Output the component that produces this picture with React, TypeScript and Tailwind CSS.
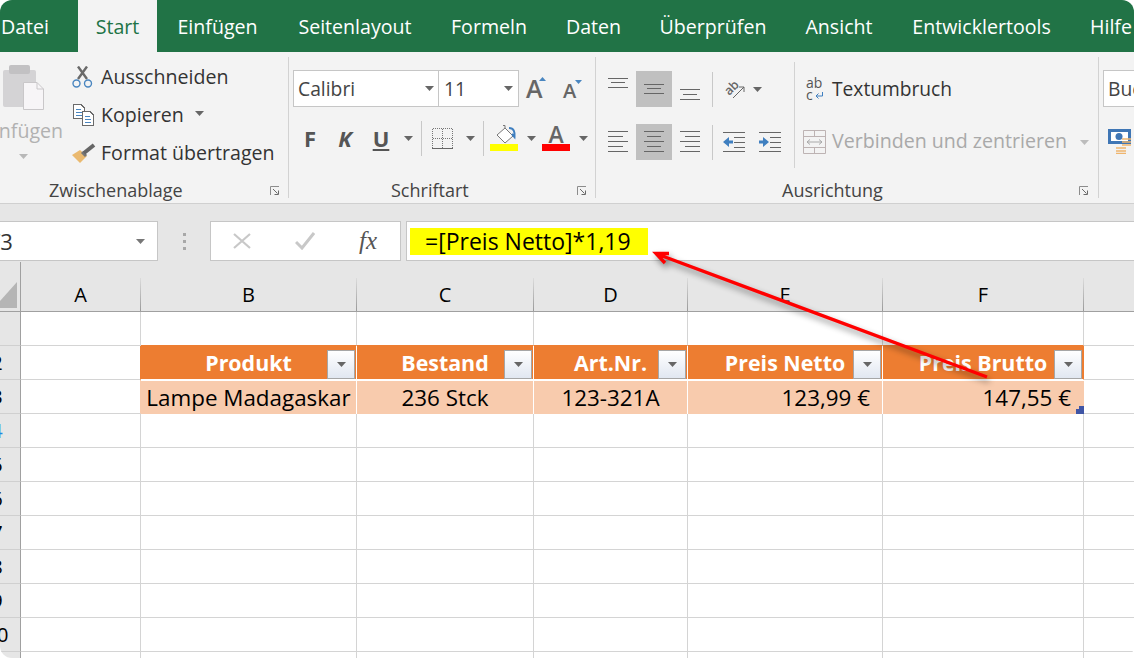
const tabs = [
  { label: "Datei", w: "w-[78px]", pl: "justify-start pl-px" },
  { label: "Start", w: "w-[79px]", active: true },
  { label: "Einfügen", w: "w-[121px]" },
  { label: "Seitenlayout", w: "w-[154px]" },
  { label: "Formeln", w: "w-[114px]" },
  { label: "Daten", w: "w-[95px]" },
  { label: "Überprüfen", w: "w-[144px]" },
  { label: "Ansicht", w: "w-[108px]" },
  { label: "Entwicklertools", w: "w-[177px]" },
  { label: "Hilfe", w: "w-[64px]", pl: "justify-start pl-[20px]" },
];

const columns = [
  { label: "A", w: "w-[120px]" },
  { label: "B", w: "w-[216px]" },
  { label: "C", w: "w-[177px]" },
  { label: "D", w: "w-[154px]" },
  { label: "E", w: "w-[195px]" },
  { label: "F", w: "w-[201px]" },
];

const tableHead = ["Produkt", "Bestand", "Art.Nr.", "Preis Netto", "Preis Brutto"];
const rows = [1, 2, 3, 4, 5, 6, 7, 8, 9, 10, 11];

const Caret = ({ color = "#666666" }: { color?: string }) => (
  <svg width="9" height="5" viewBox="0 0 9 5" className="shrink-0">
    <polygon points="0,0 9,0 4.5,5" fill={color} />
  </svg>
);

const CaretBox = ({ className = "", color }: { className?: string; color?: string }) => (
  <div className={`w-[18px] h-full flex items-center justify-center shrink-0 ${className}`}>
    <Caret color={color} />
  </div>
);

const Launcher = ({ className = "" }: { className?: string }) => (
  <svg width="9" height="9" viewBox="0 0 9 9" className={className}>
    <path d="M0.5 9V0.5H9" fill="none" stroke="#8c8c8c" />
    <path d="M3 3L7.5 7.5M8.5 4.5V8.5H4.5" fill="none" stroke="#6a6a6a" />
  </svg>
);

// horizontal line groups for the alignment buttons
const Lines = ({ lines, h = 36 }: { lines: number[][]; h?: number }) => (
  <svg width={20} height={h} viewBox={`0 0 20 ${h}`} shapeRendering="crispEdges">
    {lines.map(([x1, x2, y], i) => (
      <line key={i} x1={x1} x2={x2} y1={y + 0.5} y2={y + 0.5} stroke="#666666" />
    ))}
  </svg>
);

const Sep = ({ className = "" }: { className?: string }) => (
  <div className={`w-px h-[35px] bg-[#c8c8c8] shrink-0 ${className}`} />
);

const Footer = ({ label, pl, mr }: { label: string; pl: string; mr: string }) => (
  <div className={`h-[20px] -mb-[2px] flex items-center shrink-0 ${pl}`}>
    <span className="text-[18px] leading-none text-[#444444] whitespace-nowrap">{label}</span>
    <Launcher className={`ml-auto ${mr}`} />
  </div>
);

const ClipboardItem = ({ icon, label, caret }: { icon: React.ReactNode; label: string; caret?: boolean }) => (
  <div className="h-[38px] flex items-center">
    <div className="w-[29px] shrink-0">{icon}</div>
    <span className="text-[19.6px] text-[#333333] whitespace-nowrap">{label}</span>
    {caret && (
      <div className="ml-[11px] -mt-[4px]">
        <Caret />
      </div>
    )}
  </div>
);

const FilterButton = () => (
  <div className="absolute right-px bottom-0 w-[28px] h-[29px] border border-[#a6a6a6] bg-gradient-to-b from-white to-[#e1e7f1] flex items-center justify-center">
    <Caret />
  </div>
);

export default function App() {
  return (
    <div className="relative w-[1134px] h-[658px] overflow-hidden rounded-[12px] bg-white font-['Open_Sans',sans-serif]">
      {/* Tabs */}
      <div className="h-[52px] bg-[#217346] flex text-[19.6px]">
        {tabs.map((t) => (
          <div
            key={t.label}
            className={`${t.w} ${t.pl ?? "justify-center"} shrink-0 flex items-center pt-px whitespace-nowrap ${
              t.active ? "bg-[#f3f3f3] text-[#217346]" : "text-white"
            }`}
          >
            {t.label}
          </div>
        ))}
      </div>

      {/* Ribbon */}
      <div className="h-[152px] bg-[#f3f3f3] border-b border-[#d0d0d0] py-[5px] flex overflow-hidden">
        {/* Zwischenablage */}
        <div className="w-[289px] shrink-0 border-r border-[#d2d2d2] flex flex-col">
          <div className="flex-1 flex">
            <div className="-ml-[17px] w-[80px] shrink-0 pt-[8px] flex flex-col items-center">
              <svg width="41" height="45" viewBox="0 0 41 45" className="shrink-0">
                <rect x="0" y="5" width="33" height="37" rx="2" fill="#d4d3d5" />
                <rect x="6" y="0" width="21" height="9" rx="2" fill="#c2c1c3" />
                <path d="M20.5 17.5H34L40.5 24V44.5H20.5Z" fill="#f7f5f7" stroke="#c9c7c9" />
                <path d="M34 17.5V24H40.5" fill="none" stroke="#c9c7c9" />
              </svg>
              <span className="text-[19.6px] leading-[24px] mt-[9px] text-[#b1b1b1] whitespace-nowrap">Einfügen</span>
              <div className="mt-[11px]">
                <Caret color="#b8b8b8" />
              </div>
            </div>
            <div className="ml-[9px] pt-px">
              <ClipboardItem
                label="Ausschneiden"
                icon={
                  <svg width="21" height="22" viewBox="0 0 21 22">
                    <path d="M6 13L15 0.5M15 13L6 0.5" stroke="#6a6a6a" strokeWidth="2.4" />
                    <circle cx="4.5" cy="17.5" r="3.5" fill="none" stroke="#4a86c0" strokeWidth="1.4" />
                    <circle cx="16" cy="17.5" r="3.5" fill="none" stroke="#4a86c0" strokeWidth="1.4" />
                  </svg>
                }
              />
              <ClipboardItem
                label="Kopieren"
                caret
                icon={
                  <svg width="22" height="22" viewBox="0 0 22 22" className="ml-px" shapeRendering="crispEdges">
                    <path d="M0.5 0.5H8L11.5 4V14.5H0.5Z" fill="#fff" stroke="#6a6a6a" />
                    <path d="M3 5H8M3 8H9M3 11H9" stroke="#4a86c0" />
                    <path d="M9.5 7.5H17L20.5 11V21.5H9.5Z" fill="#fff" stroke="#6a6a6a" />
                    <path d="M12 12H17M12 15H18M12 18H18" stroke="#4a86c0" />
                  </svg>
                }
              />
              <ClipboardItem
                label="Format übertragen"
                icon={
                  <svg width="24" height="21" viewBox="0 0 24 21">
                    <polygon points="0,12 8,7 15,13 8,20" fill="#eab96f" />
                    <path d="M10 9L14 13" stroke="#777777" strokeWidth="3" />
                    <path d="M12 10L22 2" stroke="#666666" strokeWidth="4" />
                  </svg>
                }
              />
            </div>
          </div>
          <Footer label="Zwischenablage" pl="pl-[49px]" mr="mr-[9px]" />
        </div>

        {/* Schriftart */}
        <div className="w-[307px] shrink-0 border-r border-[#d2d2d2] flex flex-col">
          <div className="flex-1 pl-[4px] pt-[13px]">
            <div className="flex items-center">
              <div className="w-[146px] h-[37px] bg-white border border-[#c6c6c6] flex items-center justify-between pl-[4px] pr-[4px]">
                <span className="text-[19.3px] pt-[2px] text-[#444444]">Calibri</span>
                <Caret />
              </div>
              <div className="-ml-px w-[81px] h-[37px] bg-white border border-[#c6c6c6] flex items-center justify-between pl-[5px] pr-[5px]">
                <span className="text-[19.3px] pt-[2px] text-[#444444]">11</span>
                <Caret />
              </div>
              <div className="flex items-baseline font-semibold text-[#666666] -mt-[1px]">
                <div className="relative ml-[7px] w-[16px] text-[25px] leading-[25px]">
                  A
                  <svg width="7" height="4" viewBox="0 0 7 4" className="absolute right-[-4px] top-[1px]">
                    <polygon points="0,4 7,4 3.5,0" fill="#4a86c0" />
                  </svg>
                </div>
                <div className="relative ml-[21px] w-[13px] text-[20px] leading-[20px]">
                  A
                  <svg width="7" height="4" viewBox="0 0 7 4" className="absolute right-[-6px] top-[-1px]">
                    <polygon points="0,0 7,0 3.5,4" fill="#4a86c0" />
                  </svg>
                </div>
              </div>
            </div>
            <div className="mt-[13px] h-[36px] flex items-center text-[#555555]">
              <div className="w-[34px] text-center text-[22px] font-bold">F</div>
              <div className="w-[36px] text-center text-[22px] font-bold italic">K</div>
              <div className="w-[36px] text-center text-[22px] font-bold underline">U</div>
              <CaretBox />
              <Sep className="ml-[4px]" />
              <svg width="21" height="21" viewBox="0 0 21 21" className="ml-[10px] shrink-0" shapeRendering="crispEdges">
                <path d="M0.5 0.5H20.5V20M0.5 0.5V20M10.5 0.5V20M0.5 10.5H20.5" fill="none" stroke="#777777" strokeDasharray="1 1" />
                <path d="M0 20.5H21" stroke="#666666" />
              </svg>
              <CaretBox className="ml-[8px]" />
              <Sep className="ml-[4px]" />
              <div className="ml-[6px] w-[28px] h-[26px] shrink-0 flex flex-col">
                <svg width="28" height="19" viewBox="0 0 28 19" className="shrink-0">
                  <path d="M7 10L15 3L23 11L15 18Z" fill="#fff" stroke="#777777" />
                  <path d="M15 3V0.5M15 0.5H13" fill="none" stroke="#777777" />
                  <path d="M19 3C24 3 25 7 24.5 12L22 9" fill="none" stroke="#3f7fc0" strokeWidth="2" />
                </svg>
                <div className="h-[7px] bg-[#ffff00]" />
              </div>
              <CaretBox className="ml-[4px]" />
              <div className="ml-[2px] w-[28px] h-[26px] shrink-0 flex flex-col">
                <div className="h-[19px] text-[23px] font-semibold leading-[19px] text-center text-[#666666]">A</div>
                <div className="h-[7px] bg-[#ff0000]" />
              </div>
              <CaretBox className="ml-[4px]" />
            </div>
          </div>
          <Footer label="Schriftart" pl="pl-[102px]" mr="mr-[9px]" />
        </div>

        {/* Ausrichtung */}
        <div className="w-[503px] shrink-0 border-r border-[#d2d2d2] flex flex-col">
          <div className="flex-1 flex">
            <div className="w-[199px] h-[106px] mt-[5px] border-r border-[#d2d2d2] shrink-0 pt-[9px]">
              <div className="h-[36px] flex items-center pl-[3px]">
                <div className="w-[37px] h-full flex items-center justify-center">
                  <Lines lines={[[0, 20, 7], [3, 17, 11], [0, 20, 16]]} />
                </div>
                <div className="w-[36px] h-full bg-[#c0c0c0] flex items-center justify-center">
                  <Lines lines={[[0, 20, 13], [3, 17, 17], [0, 20, 22]]} />
                </div>
                <div className="w-[36px] h-full flex items-center justify-center">
                  <Lines lines={[[0, 20, 18], [3, 17, 23], [0, 20, 28]]} />
                </div>
                <Sep className="ml-[4px]" />
                <svg width="20" height="20" viewBox="0 0 20 20" className="ml-[12px] shrink-0">
                  <text x="0" y="13" fontSize="12.5" fontWeight="600" fill="#666666" transform="rotate(-45 7 10)">ab</text>
                  <path d="M8 19L19 8M14 8H19V13" fill="none" stroke="#666666" />
                </svg>
                <CaretBox className="ml-[3px]" />
              </div>
              <div className="h-[36px] mt-[17px] flex items-center pl-[3px]">
                <div className="w-[37px] h-full flex items-center justify-center">
                  <Lines lines={[[0, 20, 7], [0, 15, 12], [0, 20, 17], [0, 15, 22], [0, 20, 27]]} />
                </div>
                <div className="w-[36px] h-full bg-[#c0c0c0] flex items-center justify-center">
                  <Lines lines={[[0, 20, 7], [3, 17, 12], [0, 20, 17], [3, 17, 22], [0, 20, 27]]} />
                </div>
                <div className="w-[36px] h-full flex items-center justify-center">
                  <Lines lines={[[0, 20, 7], [5, 20, 12], [0, 20, 17], [5, 20, 22], [0, 20, 27]]} />
                </div>
                <Sep className="ml-[4px]" />
                <svg width="22" height="22" viewBox="0 0 22 22" className="ml-[10px] shrink-0">
                  <path d="M0 1.5H22M11 6.5H22M11 11.5H22M11 16.5H22M0 20.5H22" stroke="#666666" />
                  <path d="M0 11L6 6V9.5H10V12.5H6V16Z" fill="#3f7fc0" />
                </svg>
                <svg width="22" height="22" viewBox="0 0 22 22" className="ml-[14px] shrink-0">
                  <path d="M0 1.5H22M11 6.5H22M11 11.5H22M11 16.5H22M0 20.5H22" stroke="#666666" />
                  <path d="M10 11L4 6V9.5H0V12.5H4V16Z" fill="#3f7fc0" />
                </svg>
              </div>
            </div>
            <div className="flex-1 mt-[5px] pt-[9px] min-w-0">
              <div className="h-[36px] flex items-center pl-[11px]">
                <svg width="18" height="24" viewBox="0 0 18 24" className="mr-[8px] shrink-0">
                  <text x="0" y="11" fontSize="14" fill="#555555">ab</text>
                  <text x="0" y="23" fontSize="14" fill="#555555">c</text>
                  <path d="M16.5 15V19H10M12.5 16.5L10 19L12.5 21.5" fill="none" stroke="#3f7fc0" />
                </svg>
                <span className="text-[19.2px] pt-px text-[#333333] whitespace-nowrap">Textumbruch</span>
              </div>
              <div className="h-[36px] mt-[17px] flex items-center pl-[8px]">
                <svg width="23" height="24" viewBox="0 0 23 24" className="mr-[6px] shrink-0">
                  <path d="M0.5 0.5H22.5V23.5H0.5ZM0.5 6.5H22.5M0.5 17.5H22.5M11.5 0.5V6.5M11.5 17.5V23.5" fill="none" stroke="#bdb3b3" />
                  <path d="M4 12H19M7 9.5L4 12L7 14.5M16 9.5L19 12L16 14.5" fill="none" stroke="#a9a9a9" />
                </svg>
                <span className="text-[19.6px] -mt-[2px] text-[#a9a9a9] whitespace-nowrap">Verbinden und zentrieren</span>
                <CaretBox className="ml-auto mr-[5px]" color="#bcbcbc" />
              </div>
            </div>
          </div>
          <Footer label="Ausrichtung" pl="pl-[186px]" mr="mr-[10px]" />
        </div>

        {/* Zahl, cut off by the window */}
        <div className="flex-1 pl-[4px] pt-[13px] min-w-0">
          <div className="w-[140px] h-[37px] bg-white border border-[#c6c6c6] flex items-center pl-[4px]">
            <span className="text-[19.3px] pt-[2px] text-[#444444] whitespace-nowrap">Buchhaltung</span>
          </div>
          <svg width="24" height="25" viewBox="0 0 24 25" className="ml-[5px] mt-[22px]">
            <rect x="0" y="0" width="23" height="15" fill="#3f76b5" />
            <rect x="3" y="3" width="17" height="9" fill="#fff" />
            <circle cx="11" cy="7.5" r="3.5" fill="#3f76b5" />
            <path d="M14 10H23M14 13H23M14 16H23M8 19H18M8 22H18M8 24.5H18" stroke="#efb56e" strokeWidth="1.5" />
          </svg>
        </div>
      </div>

      {/* Formula bar */}
      <div className="h-[58px] bg-[#e6e6e6] pt-[17px] flex">
        <div className="-ml-[2px] w-[160px] h-[40px] shrink-0 bg-white border border-[#c6c6c6] flex items-center overflow-hidden">
          <span className="-ml-[10px] text-[22px] text-[#333333]">F3</span>
          <div className="ml-auto mr-[12px]">
            <Caret color="#777777" />
          </div>
        </div>
        <div className="w-[52px] shrink-0 h-[40px] flex flex-col items-center justify-center gap-[4px]">
          <div className="w-[3px] h-[3px] bg-[#a8a8a8]" />
          <div className="w-[3px] h-[3px] bg-[#a8a8a8]" />
          <div className="w-[3px] h-[3px] bg-[#a8a8a8]" />
        </div>
        <div className="w-[191px] h-[40px] shrink-0 bg-white border border-[#c6c6c6] flex items-center">
          <div className="w-[62px] flex justify-center">
            <svg width="18" height="16" viewBox="0 0 18 16">
              <path d="M1 1L17 15M17 1L1 15" stroke="#c8c8c8" strokeWidth="2.2" />
            </svg>
          </div>
          <div className="w-[64px] flex justify-center">
            <svg width="20" height="18" viewBox="0 0 20 18">
              <path d="M1 10L7 16L19 1" fill="none" stroke="#c8c8c8" strokeWidth="3" />
            </svg>
          </div>
          <div className="w-[62px] text-center font-['Liberation_Serif',serif] italic text-[25px] text-[#555555]">fx</div>
        </div>
        <div className="ml-[5px] flex-1 h-[40px] bg-white border border-[#c6c6c6] border-r-0 flex items-center pl-[3px]">
          <div className="w-[238px] h-[27px] bg-[#ffff00] pl-[15px] pt-px flex items-center text-[23px] text-black whitespace-nowrap">
            =[Preis Netto]*1,19
          </div>
        </div>
      </div>

      {/* Column headers */}
      <div className="h-[50px] bg-[#e6e6e6] border-b border-[#a0a0a0] flex">
        <div className="w-[21px] shrink-0 border-r border-[#a0a0a0] pt-[20px]">
          <svg width="17" height="26" viewBox="0 0 17 26">
            <polygon points="17,0 17,26 0,26 0,19" fill="#b5b5b5" />
          </svg>
        </div>
        {columns.map((c) => (
          <div key={c.label} className={`${c.w} shrink-0 pt-[16px] flex`}>
            <div className="flex-1 flex items-center justify-center text-[20px] text-black">{c.label}</div>
            <div className="w-px bg-gradient-to-b from-[#dcdcdc] to-[#9a9a9a]" />
          </div>
        ))}
      </div>

      {/* Sheet */}
      <div className="flex flex-col">
        {rows.map((r) => {
          const lineColor = r === 1 ? "border-b-[#ed7d31]" : r === 2 ? "border-b-white" : r === 3 ? "border-b-[#f8cbad]" : "border-b-[#d4d4d4]";
          const edge = r === 2 ? "border-r-[#ed7d31]" : r === 3 ? "border-r-[#f8cbad]" : "border-r-[#d4d4d4]";
          return (
            <div key={r} className="h-[34px] flex shrink-0">
              <div className="w-[21px] shrink-0 bg-[#e6e6e6] border-r border-r-[#a0a0a0] border-b border-b-[#d0d0d0] overflow-hidden">
                <div className={`-ml-[23px] w-[40px] h-full flex items-center justify-center text-[20px] ${r === 4 ? "text-[#1e88e5]" : "text-black"}`}>
                  {r}
                </div>
              </div>
              <div className={`w-[120px] shrink-0 border-r border-b border-b-[#d4d4d4] ${edge}`} />
              {r === 2 &&
                tableHead.map((h, i) => (
                  <div
                    key={h}
                    className={`${columns[i + 1].w} shrink-0 relative bg-[#ed7d31] border-b border-b-white border-r ${
                      i === 4 ? "border-r-[#ed7d31]" : "border-r-white"
                    } flex items-center justify-center pt-px text-[21.4px] font-bold text-white whitespace-nowrap`}
                  >
                    {h}
                    <FilterButton />
                  </div>
                ))}
              {r === 3 && (
                <>
                  <div className="w-[216px] shrink-0 bg-[#f8cbad] border-t border-t-white border-r border-r-white flex items-center justify-center text-[22.4px] text-black whitespace-nowrap">
                    Lampe Madagaskar
                  </div>
                  <div className="w-[177px] shrink-0 bg-[#f8cbad] border-t border-t-white border-r border-r-white flex items-center justify-center text-[22.4px] text-black">
                    236 Stck
                  </div>
                  <div className="w-[154px] shrink-0 bg-[#f8cbad] border-t border-t-white border-r border-r-white flex items-center justify-center text-[22.4px] text-black">
                    123-321A
                  </div>
                  <div className="w-[195px] shrink-0 bg-[#f8cbad] border-t border-t-white border-r border-r-white flex items-center justify-end pr-[12px] text-[22.4px] text-black">
                    123,99 €
                  </div>
                  <div className="w-[201px] shrink-0 relative bg-[#f8cbad] border-t border-t-white flex items-center justify-end pr-[13px] text-[22.4px] text-black">
                    147,55 €
                    <svg width="8" height="8" viewBox="0 0 8 8" className="absolute right-0 bottom-0">
                      <polygon points="3,0 8,0 8,8 0,8 0,3 3,3" fill="#3f55a5" />
                    </svg>
                  </div>
                </>
              )}
              {r !== 2 &&
                r !== 3 &&
                columns.slice(1).map((c) => (
                  <div key={c.label} className={`${c.w} shrink-0 border-r border-r-[#d4d4d4] border-b ${lineColor}`} />
                ))}
              <div className="flex-1 border-b border-b-[#d4d4d4]" />
            </div>
          );
        })}
      </div>

      {/* Red annotation arrow */}
      <svg
        width="1134"
        height="658"
        viewBox="0 0 1134 658"
        className="absolute inset-0 pointer-events-none drop-shadow-[2px_4px_3px_rgba(0,0,0,0.45)]"
      >
        <path d="M987 377L657 254M669 253.5L656 253.5L665 263" fill="none" stroke="#ff0000" strokeWidth="3.4" />
      </svg>
    </div>
  );
}
